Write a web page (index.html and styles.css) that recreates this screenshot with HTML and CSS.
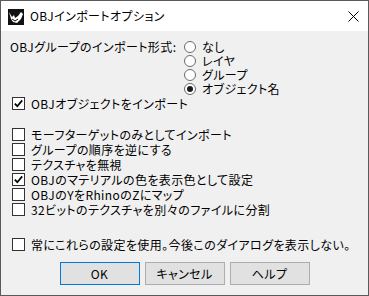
FILE: index.html
```html
<!DOCTYPE html>
<html lang="ja">
<head>
<meta charset="utf-8">
<title>OBJインポートオプション</title>
<link rel="stylesheet" href="styles.css">
</head>
<body>
<div class="window">
  <div class="titlebar">
    <svg class="app-icon" width="16" height="16" viewBox="0 0 16 16">
      <rect x="0" y="0" width="16" height="16" fill="#111"/>
      <path d="M1 3 L4 8 L6 6 L7 9 L10 7 L13 3 L15 5 L13 10 L9 14 L5 13 L3 10 Z" fill="#fff"/>
      <path d="M4 10 L7 12 L10 10" stroke="#111" stroke-width="1" fill="none"/>
    </svg>
    <span class="title">OBJインポートオプション</span>
    <svg class="close" width="11" height="11" viewBox="0 0 11 11">
      <path d="M0.5 0.5 L10.5 10.5 M10.5 0.5 L0.5 10.5" stroke="#000" stroke-width="1"/>
    </svg>
  </div>
  <div class="client">
    <div class="group-row">
      <div class="group-label">OBJグループのインポート形式:</div>
      <div class="radios">
        <div class="radio-row"><span class="radio"></span><span class="lbl">なし</span></div>
        <div class="radio-row"><span class="radio"></span><span class="lbl">レイヤ</span></div>
        <div class="radio-row"><span class="radio"></span><span class="lbl">グループ</span></div>
        <div class="radio-row"><span class="radio checked"></span><span class="lbl">オブジェクト名</span></div>
      </div>
    </div>
    <div class="check-row"><span class="box checked"><svg width="11" height="11" viewBox="0 0 11 11"><path d="M1.8 5.6 L4.3 8.2 L9.2 2.4" stroke="#000" stroke-width="1.7" fill="none"/></svg></span><span class="lbl">OBJオブジェクトをインポート</span></div>
    <div class="check-list">
      <div class="check-row"><span class="box"></span><span class="lbl">モーフターゲットのみとしてインポート</span></div>
      <div class="check-row"><span class="box"></span><span class="lbl">グループの順序を逆にする</span></div>
      <div class="check-row"><span class="box"></span><span class="lbl">テクスチャを無視</span></div>
      <div class="check-row"><span class="box checked"><svg width="11" height="11" viewBox="0 0 11 11"><path d="M1.8 5.6 L4.3 8.2 L9.2 2.4" stroke="#000" stroke-width="1.7" fill="none"/></svg></span><span class="lbl">OBJのマテリアルの色を表示色として設定</span></div>
      <div class="check-row"><span class="box"></span><span class="lbl">OBJのYをRhinoのZにマップ</span></div>
      <div class="check-row"><span class="box"></span><span class="lbl">32ビットのテクスチャを別々のファイルに分割</span></div>
    </div>
    <div class="check-row always"><span class="box"></span><span class="lbl">常にこれらの設定を使用。今後このダイアログを表示しない。</span></div>
    <div class="buttons">
      <button class="btn default">OK</button>
      <button class="btn">キャンセル</button>
      <button class="btn">ヘルプ</button>
    </div>
  </div>
</div>
</body>
</html>
```
FILE: styles.css
```css
html, body {
  margin: 0;
  padding: 0;
}
body {
  font-family: "Noto Sans CJK JP", "Noto Sans", sans-serif;
  font-size: 12px;
  font-feature-settings: "palt";
  letter-spacing: 0.4px;
  color: #000;
  background: #f0f0f0;
}
.window {
  width: 369px;
  height: 296px;
  box-sizing: border-box;
  border: 1px solid #5a5a5a;
  display: flex;
  flex-direction: column;
  overflow: hidden;
}
.titlebar {
  height: 30px;
  background: #fff;
  display: flex;
  align-items: center;
  padding: 0 9px 0 7px;
  flex: none;
}
.app-icon {
  flex: none;
  margin-top: 1px;
}
.title {
  display: block;
  margin-left: 6px;
  line-height: 16px;
  height: 16px;
}
.close {
  margin-left: auto;
  margin-top: 1px;
}
.client {
  flex: 1;
  background: #f0f0f0;
  padding: 9px 0 0 9px;
  display: flex;
  flex-direction: column;
}
.group-row {
  display: flex;
}
.group-label {
  width: 174px;
  line-height: 14px;
  height: 14px;
  white-space: nowrap;
}
.radios {
  display: flex;
  flex-direction: column;
}
.lbl {
  display: block;
  white-space: nowrap;
}
.radio-row {
  display: flex;
  align-items: center;
  height: 14px;
  line-height: 14px;
}
.radio-row .lbl {
  height: 14px;
}
.radio {
  width: 12px;
  height: 12px;
  box-sizing: border-box;
  border: 1px solid #6a6a6a;
  border-radius: 50%;
  background: #fff;
  margin-right: 6px;
  display: flex;
  align-items: center;
  justify-content: center;
}
.radio.checked::after {
  content: "";
  width: 6px;
  height: 6px;
  border-radius: 50%;
  background: #1a1a1a;
}
.check-row {
  display: flex;
  align-items: center;
  height: 15px;
  line-height: 15px;
  padding-left: 2px;
}
.check-row .lbl {
  height: 15px;
}
.box {
  width: 13px;
  height: 13px;
  box-sizing: border-box;
  border: 1px solid #333;
  background: #fff;
  margin-right: 6px;
  flex: none;
  display: flex;
  align-items: center;
  justify-content: center;
}
.check-list {
  margin-top: 16px;
  display: flex;
  flex-direction: column;
}
.always {
  margin-top: 20px;
}
.buttons {
  margin-top: 10px;
  margin-left: -9px;
  display: flex;
  justify-content: center;
  gap: 5px;
}
.btn {
  width: 80px;
  height: 23px;
  box-sizing: border-box;
  border: 1px solid #adadad;
  background: #e1e1e1;
  font-family: inherit;
  font-size: 12px;
  font-feature-settings: "palt";
  letter-spacing: 0.4px;
  color: #000;
  padding: 0;
  margin: 0;
}
.btn.default {
  border-color: #0078d7;
}
```
